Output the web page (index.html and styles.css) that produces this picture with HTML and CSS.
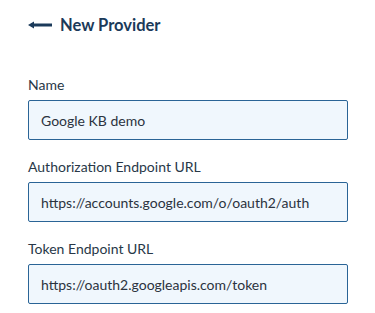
FILE: index.html
```html
<!DOCTYPE html>
<html>
    <head>
        <meta charset="UTF-8">
        <title>New Provider</title>
        <link rel="stylesheet" href="styles.css">
    </head>
    <body>
        <article class="page">
            <!--header-->
            <div class="head">
                <a class="back" href="#">
                    <svg width="24" height="10" viewBox="0 0 24 10">
                        <path d="M3 5 H24" stroke="#1b3a5a" stroke-width="3"/>
                        <path d="M0 5 L6 1.5 V8.5 Z" fill="#1b3a5a"/>
                    </svg>
                </a>
                <h1>New Provider</h1>
            </div>
            <!--form-->
            <form class="form">
                <div class="field">
                    <label for="name">Name</label>
                    <input type="text" id="name" value="Google KB demo">
                </div>
                <div class="field">
                    <label for="auth">Authorization Endpoint URL</label>
                    <input type="text" id="auth" value="https://accounts.google.com/o/oauth2/auth">
                </div>
                <div class="field">
                    <label for="token">Token Endpoint URL</label>
                    <input type="text" id="token" value="https://oauth2.googleapis.com/token">
                </div>
            </form>
        </article>
    </body>
</html>
```

FILE: styles.css
```css
body{
    margin: 0;
    font-family: Lato, 'Noto Sans', sans-serif;
    background-color: white;
}
.page{
    padding: 14px 27px 0 28px;
}
.head{
    display: flex;
    align-items: center;
    gap: 8px;
    height: 22px;
}
.back{
    display: flex;
}
.head h1{
    margin: 0;
    font-size: 16.5px;
    font-weight: 700;
    color: #1b3a5a;
}
.form{
    margin-top: 39px;
}
.field{
    display: flex;
    flex-direction: column;
    margin-bottom: 17px;
}
.field label{
    font-size: 14px;
    line-height: 20px;
    color: #283848;
    margin-bottom: 5px;
}
.field input{
    box-sizing: border-box;
    height: 40px;
    width: 100%;
    border: 1px solid #2a6496;
    border-radius: 2px;
    background-color: #f0f7fd;
    padding: 0 12px;
    font-size: 14px;
    font-family: Lato, 'Noto Sans', sans-serif;
    color: #2b3340;
    outline: none;
}
```
